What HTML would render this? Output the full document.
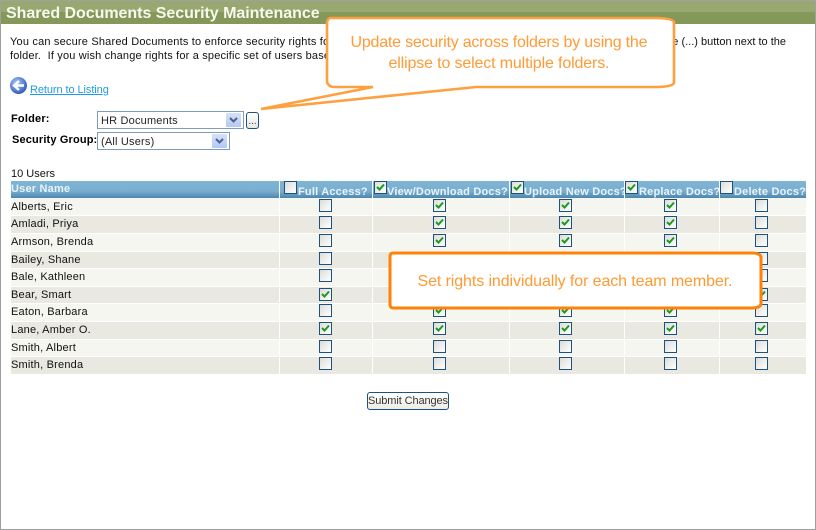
<!DOCTYPE html>
<html><head><meta charset="utf-8"><style>
html,body{margin:0;padding:0;background:#fff}
#p{position:relative;width:816px;height:530px;overflow:hidden;background:#fff;font-family:"Liberation Sans",sans-serif;font-size:11px;color:#111}
#p div,#p span.a,#p a{position:absolute;white-space:nowrap}
.t{line-height:14px;letter-spacing:.19px}
.b{font-weight:bold;color:#000}
.r{left:11px;width:795px}
.o{background:#f5f6f0}.e{background:#e9e9e1}
.s{width:1px;top:181px;height:193px;background:#fff}
.n{left:11px;line-height:14px;letter-spacing:.2px}
.c{width:11px;height:11px;border:1px solid #1c5180;background:linear-gradient(135deg,#dcdcd7,#fff)}
.c svg{position:absolute;left:1px;top:1px;width:9px;height:9px}
.h{color:#e8f3fa;font-weight:bold;line-height:14px;letter-spacing:.2px;top:185px}
.x1{left:319px}.x2{left:433px}.x3{left:559px}.x4{left:664px}.x5{left:755px}
.sel{background:#fff;border:1px solid #7f9db9;height:16px;line-height:16px}
.arr{background:linear-gradient(#d5e1fb,#b3c8f5);width:15px;height:14px;top:1px;border-radius:1px}
.arr svg{position:absolute;left:3px;top:4px}
</style></head><body><div id="p">
<div style="left:0;top:0;width:816px;height:1px;background:#a0a0a0"></div>
<div style="left:0;top:0;width:1px;height:530px;background:#a0a0a0"></div>
<div style="left:815px;top:0;width:1px;height:530px;background:#a0a0a0"></div>
<div style="left:0;top:529px;width:816px;height:1px;background:#a0a0a0"></div>
<div style="left:1px;top:1px;width:814px;height:11px;background:#98a870"></div>
<div style="left:1px;top:12px;width:814px;height:12px;background:#84985a"></div>
<div class="b" style="left:6px;top:4px;font-size:16px;line-height:20px;letter-spacing:-.03px;color:#f8f8ee">Shared Documents Security Maintenance</div>
<div class="t" style="left:10px;top:35px">You can secure Shared Documents to enforce security rights for</div>
<div class="t" style="left:10px;top:49px;letter-spacing:.17px">folder.&nbsp; If you wish change rights for a specific set of users base</div>
<div class="t" style="right:30px;top:35px;letter-spacing:0">e (...) button next to the</div>
<svg style="position:absolute;left:9px;top:76px" width="19" height="19" viewBox="0 0 19 19"><defs><radialGradient id="g" cx=".4" cy=".35" r=".7"><stop offset="0" stop-color="#a8c8f8"/><stop offset="1" stop-color="#2b55b8"/></radialGradient></defs><circle cx="9.500" cy="9.500" r="8.500" fill="url(#g)"/><path d="M15 9.500H6M10 5L5 9.500l5 4.500" fill="none" stroke="#fff" stroke-width="2.400"/></svg>
<a class="t" style="left:30px;top:83px;letter-spacing:-.08px;color:#1e9be0;text-decoration:underline">Return to Listing</a>
<div class="b t" style="left:11px;top:112px;letter-spacing:.2px">Folder:</div>
<div class="b t" style="left:12px;top:133px;letter-spacing:.15px">Security Group:</div>
<div class="sel" style="left:97px;top:111px;width:145px"><div class="t" style="left:3px;top:2px;color:#222">HR Documents</div><div class="arr" style="left:128px"><svg width="9" height="6"><path d="M1 1l3.500 3.500L8 1" fill="none" stroke="#4d6185" stroke-width="2"/></svg></div></div>
<div class="sel" style="left:97px;top:132px;width:131px"><div class="t" style="left:3px;top:2px;color:#222">(All Users)</div><div class="arr" style="left:114px"><svg width="9" height="6"><path d="M1 1l3.500 3.500L8 1" fill="none" stroke="#4d6185" stroke-width="2"/></svg></div></div>
<div style="left:246px;top:112px;width:11px;height:15px;border:1px solid #1c5180;border-radius:3px;background:linear-gradient(#fff,#e8e8df);text-align:center;line-height:18px;font-size:10px;color:#444">...</div>
<div class="t" style="left:11px;top:167px;letter-spacing:0">10 Users</div>

<div class="r" style="top:181px;height:17px;background:linear-gradient(#7fb4d4 0,#7aaed0 60%,#4b86ae 100%)"></div>
<div class="r o" style="top:198px;height:17px"></div>
<div class="r e" style="top:216px;height:17px"></div>
<div class="r o" style="top:234px;height:17px"></div>
<div class="r e" style="top:252px;height:16px"></div>
<div class="r o" style="top:269px;height:17px"></div>
<div class="r e" style="top:287px;height:16px"></div>
<div class="r o" style="top:304px;height:17px"></div>
<div class="r e" style="top:322px;height:17px"></div>
<div class="r o" style="top:340px;height:16px"></div>
<div class="r e" style="top:357px;height:17px"></div>
<div class="s" style="left:279px"></div><div class="s" style="left:372px"></div><div class="s" style="left:509px"></div><div class="s" style="left:624px"></div><div class="s" style="left:719px"></div>

<div class="h" style="left:11px;top:182px">User Name</div>
<div class="c" style="left:284px;top:181px"></div><div class="h" style="left:298px">Full Access?</div>
<div class="c" style="left:374px;top:181px"><svg viewBox="0 0 9 9"><path d="M1 4l2.500 2.500L8 1.500" fill="none" stroke="#1d9a1d" stroke-width="2"/></svg></div><div class="h" style="left:387px">View/Download Docs?</div>
<div class="c" style="left:511px;top:181px"><svg viewBox="0 0 9 9"><path d="M1 4l2.500 2.500L8 1.500" fill="none" stroke="#1d9a1d" stroke-width="2"/></svg></div><div class="h" style="left:524px">Upload New Docs?</div>
<div class="c" style="left:625px;top:181px"><svg viewBox="0 0 9 9"><path d="M1 4l2.500 2.500L8 1.500" fill="none" stroke="#1d9a1d" stroke-width="2"/></svg></div><div class="h" style="left:639px">Replace Docs?</div>
<div class="c" style="left:720px;top:181px"></div><div class="h" style="left:734px">Delete Docs?</div>

<div class="n" style="top:200px">Alberts, Eric</div>
<div class="n" style="top:217px">Amladi, Priya</div>
<div class="n" style="top:235px">Armson, Brenda</div>
<div class="n" style="top:253px">Bailey, Shane</div>
<div class="n" style="top:270px">Bale, Kathleen</div>
<div class="n" style="top:288px">Bear, Smart</div>
<div class="n" style="top:305px">Eaton, Barbara</div>
<div class="n" style="top:323px">Lane, Amber O.</div>
<div class="n" style="top:341px">Smith, Albert</div>
<div class="n" style="top:358px">Smith, Brenda</div>

<svg width="0" height="0" style="position:absolute"><defs><path id="k" d="M1 4l2.500 2.500L8 1.500" fill="none" stroke="#1d9a1d" stroke-width="2"/></defs></svg>

<div class="c x1" style="top:199px"></div><div class="c x2" style="top:199px"><svg viewBox="0 0 9 9"><use href="#k"/></svg></div><div class="c x3" style="top:199px"><svg viewBox="0 0 9 9"><use href="#k"/></svg></div><div class="c x4" style="top:199px"><svg viewBox="0 0 9 9"><use href="#k"/></svg></div><div class="c x5" style="top:199px"></div>
<div class="c x1" style="top:216px"></div><div class="c x2" style="top:216px"><svg viewBox="0 0 9 9"><use href="#k"/></svg></div><div class="c x3" style="top:216px"><svg viewBox="0 0 9 9"><use href="#k"/></svg></div><div class="c x4" style="top:216px"><svg viewBox="0 0 9 9"><use href="#k"/></svg></div><div class="c x5" style="top:216px"></div>
<div class="c x1" style="top:234px"></div><div class="c x2" style="top:234px"><svg viewBox="0 0 9 9"><use href="#k"/></svg></div><div class="c x3" style="top:234px"><svg viewBox="0 0 9 9"><use href="#k"/></svg></div><div class="c x4" style="top:234px"><svg viewBox="0 0 9 9"><use href="#k"/></svg></div><div class="c x5" style="top:234px"></div>
<div class="c x1" style="top:252px"></div><div class="c x5" style="top:252px"></div>
<div class="c x1" style="top:269px"></div><div class="c x5" style="top:269px"></div>
<div class="c x1" style="top:288px"><svg viewBox="0 0 9 9"><use href="#k"/></svg></div><div class="c x5" style="top:288px"><svg viewBox="0 0 9 9"><use href="#k"/></svg></div>
<div class="c x1" style="top:304px"></div><div class="c x2" style="top:304px"><svg viewBox="0 0 9 9"><use href="#k"/></svg></div><div class="c x3" style="top:304px"><svg viewBox="0 0 9 9"><use href="#k"/></svg></div><div class="c x4" style="top:304px"><svg viewBox="0 0 9 9"><use href="#k"/></svg></div><div class="c x5" style="top:304px"></div>
<div class="c x1" style="top:322px"><svg viewBox="0 0 9 9"><use href="#k"/></svg></div><div class="c x2" style="top:322px"><svg viewBox="0 0 9 9"><use href="#k"/></svg></div><div class="c x3" style="top:322px"><svg viewBox="0 0 9 9"><use href="#k"/></svg></div><div class="c x4" style="top:322px"><svg viewBox="0 0 9 9"><use href="#k"/></svg></div><div class="c x5" style="top:322px"><svg viewBox="0 0 9 9"><use href="#k"/></svg></div>
<div class="c x1" style="top:340px"></div><div class="c x2" style="top:340px"></div><div class="c x3" style="top:340px"></div><div class="c x4" style="top:340px"></div><div class="c x5" style="top:340px"></div>
<div class="c x1" style="top:357px"></div><div class="c x2" style="top:357px"></div><div class="c x3" style="top:357px"></div><div class="c x4" style="top:357px"></div><div class="c x5" style="top:357px"></div>

<div style="left:367px;top:392px;width:80px;height:16px;border:1px solid #1c5180;border-radius:3px;background:linear-gradient(#fff,#ecece4);text-align:center;line-height:16px;color:#333;letter-spacing:-.1px">Submit Changes</div>

<svg style="position:absolute;left:0;top:0" width="816" height="530" viewBox="0 0 816 530">
<path d="M331 18H655Q672 18 674 22V83Q672 87 655 87H476L261 109L373 87H333Q328 86 327 82V22Q328 18 331 18Z" fill="#fff" stroke="#ffa040" stroke-width="2.600"/>
<path d="M393 253H752Q760 253 761 257V304Q760 308 752 308H393Q390 308 390 304V257Q390 253 393 253Z" fill="#fff" stroke="#ff8208" stroke-width="3"/>
<text x="499" y="47" font-family="Liberation Sans" font-size="16" fill="#ff9a35" text-anchor="middle" textLength="297" lengthAdjust="spacing">Update security across folders by using the</text>
<text x="499" y="68" font-family="Liberation Sans" font-size="16" fill="#ff9a35" text-anchor="middle" textLength="221" lengthAdjust="spacing">ellipse to select multiple folders.</text>
<text x="575" y="286" font-family="Liberation Sans" font-size="16" fill="#ff9a35" text-anchor="middle" textLength="315" lengthAdjust="spacing">Set rights individually for each team member.</text>
</svg>
</div></body></html>
